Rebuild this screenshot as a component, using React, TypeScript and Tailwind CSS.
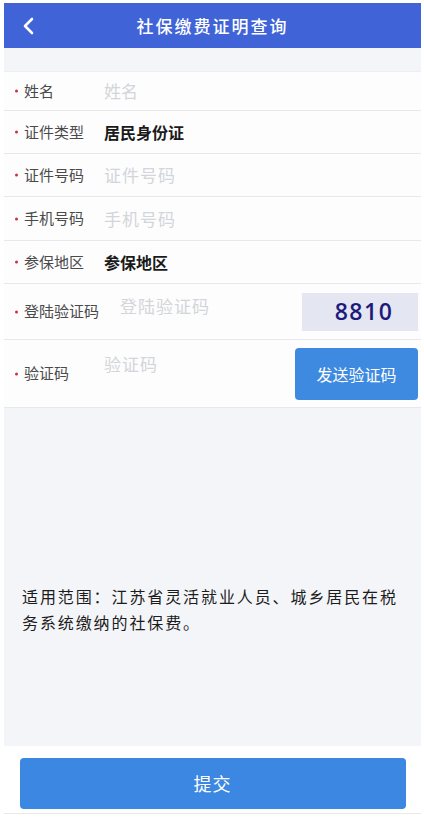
import React from "react";

const cjk = { fontFamily: '"Noto Sans CJK SC", "Noto Sans", sans-serif' };

function Dot() {
  return <span className="absolute left-[11px] top-1/2 -translate-y-1/2 w-[3px] h-[3px] rounded-full bg-[#c8323a]" />;
}

function Row({
  label,
  children,
  h,
}: {
  label: string;
  children?: React.ReactNode;
  h: string;
}) {
  return (
    <div className={`relative flex items-center bg-[#fdfdfe] border-b border-[#e6e8ec] ${h}`}>
      <Dot />
      <span className="ml-[20px] w-[80px] shrink-0 text-[15px] text-[#4a4a4a]">{label}</span>
      {children}
    </div>
  );
}

export default function App() {
  return (
    <div className="w-[424px] h-[826px] bg-white overflow-hidden" style={cjk}>
      <div className="ml-[4px] mr-[3px] pt-[3px] flex flex-col h-full">
        {/* top bar */}
        <div className="relative h-[45px] bg-[#4063d8] flex items-center justify-center shrink-0">
          <svg className="absolute left-[18px] top-[13px]" width="14" height="20" viewBox="0 0 14 20">
            <polyline points="10,3 3,10 10,17" fill="none" stroke="#ffffff" strokeWidth="2.6" strokeLinecap="round" strokeLinejoin="round" />
          </svg>
          <span className="text-white text-[17px] tracking-[2px] font-medium">社保缴费证明查询</span>
        </div>

        <div className="h-[24px] bg-[#f4f5f9] border-b border-[#eceef2]" />

        <Row label="姓名" h="h-[39px]">
          <span className="text-[17px] text-[#d3d5d9]">姓名</span>
        </Row>
        <Row label="证件类型" h="h-[43px]">
          <span className="text-[16px] font-bold text-[#1a1a1a]">居民身份证</span>
        </Row>
        <Row label="证件号码" h="h-[43px]">
          <span className="text-[17px] text-[#d3d5d9] tracking-[1px]">证件号码</span>
        </Row>
        <Row label="手机号码" h="h-[44px]">
          <span className="text-[17px] text-[#d3d5d9] tracking-[1px]">手机号码</span>
        </Row>
        <Row label="参保地区" h="h-[43px]">
          <span className="text-[16px] font-bold text-[#1a1a1a]">参保地区</span>
        </Row>
        <Row label="登陆验证码" h="h-[56px]">
          <span className="ml-[16px] -mt-[12px] text-[17px] text-[#d3d5d9] tracking-[1px]">登陆验证码</span>
          <div className="ml-auto mr-[3px] w-[116px] h-[38px] bg-[#e4e6f2] flex items-center justify-center">
            <span className="text-[23px] font-semibold text-[#1d1a7c] tracking-[1.5px] pl-[8px]" style={{ fontFamily: '"Open Sans", "DejaVu Sans", sans-serif' }}>
              8810
            </span>
          </div>
        </Row>
        <Row label="验证码" h="h-[68px]">
          <span className="-mt-[20px] text-[17px] text-[#d3d5d9] tracking-[1px]">验证码</span>
          <button className="ml-auto mr-[3px] w-[123px] h-[52px] rounded-[4px] bg-[#3d8ae0] text-white text-[16px]">
            发送验证码
          </button>
        </Row>

        {/* notice */}
        <div className="flex-1 bg-[#f4f5f9] flex flex-col">
          <p className="mt-[175px] ml-[18px] w-[384px] text-[16px] leading-[26px] tracking-[1.9px] text-[#1c1c1c]">
            适用范围：江苏省灵活就业人员、城乡居民在税务系统缴纳的社保费。
          </p>
        </div>

        <div className="h-[68px] shrink-0 bg-white flex items-start justify-center pt-[12px] border-b border-[#e8e9ed]">
          <button className="w-[386px] h-[51px] rounded-[4px] bg-[#3b87e1] text-white text-[18px] tracking-[1px]">
            提交
          </button>
        </div>
        <div className="h-[12px] shrink-0" />
      </div>
    </div>
  );
}
